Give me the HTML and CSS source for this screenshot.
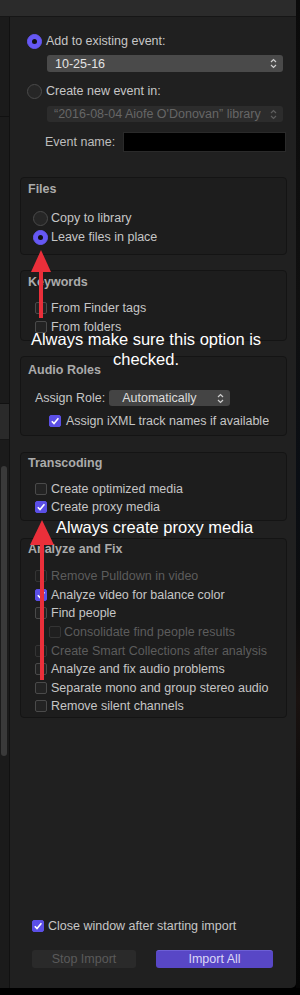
FILE: index.html
```html
<!DOCTYPE html>
<html>
<head>
<meta charset="utf-8">
<link rel="stylesheet" href="styles.css">
</head>
<body>
<div class="screen">
  <div class="window">
    <div class="titlebar"></div>
    <div class="body">
      <div class="sidebar">
        <div class="sb-top"></div>
        <div class="sb-mid"></div>
        <div class="sb-band"></div>
        <div class="sb-scroll"><div class="thumb"></div></div>
        <div class="sb-rest"></div>
      </div>
      <div class="main">
        <div class="event">
          <div class="row top-radio">
            <span class="radio on"></span><span class="lbl">Add to existing event:</span>
          </div>
          <div class="popup wide">
            <span>10-25-16</span>
            <svg class="chev" width="7" height="11" viewBox="0 0 7 11"><path d="M1 4 L3.5 1.5 L6 4 M1 7 L3.5 9.5 L6 7" fill="none" stroke="#cfcfcf" stroke-width="1.2"/></svg>
          </div>
          <div class="row top-radio second">
            <span class="radio"></span><span class="lbl">Create new event in:</span>
          </div>
          <div class="popup wide disabled">
            <span>“2016-08-04 Aiofe O'Donovan” library</span>
            <svg class="chev" width="7" height="11" viewBox="0 0 7 11"><path d="M1 4 L3.5 1.5 L6 4 M1 7 L3.5 9.5 L6 7" fill="none" stroke="#5e5e5e" stroke-width="1.2"/></svg>
          </div>
          <div class="name-row">
            <span class="lbl">Event name:</span>
            <span class="field"></span>
          </div>
        </div>

        <div class="group g-files">
          <div class="title">Files</div>
          <div class="opts">
            <div class="row"><span class="slot"><span class="radio"></span></span><span class="lbl">Copy to library</span></div>
            <div class="row"><span class="slot"><span class="radio on"></span></span><span class="lbl">Leave files in place</span></div>
          </div>
        </div>

        <div class="group g-keys">
          <div class="title">Keywords</div>
          <div class="opts">
            <div class="row"><span class="slot"><span class="box"></span></span><span class="lbl">From Finder tags</span></div>
            <div class="row"><span class="slot"><span class="box"></span></span><span class="lbl">From folders</span></div>
          </div>
        </div>

        <div class="group g-audio">
          <div class="title">Audio Roles</div>
          <div class="role-row">
            <span class="lbl">Assign Role:</span>
            <div class="popup role">
              <span>Automatically</span>
              <svg class="chev" width="7" height="11" viewBox="0 0 7 11"><path d="M1 4 L3.5 1.5 L6 4 M1 7 L3.5 9.5 L6 7" fill="none" stroke="#cfcfcf" stroke-width="1.2"/></svg>
            </div>
          </div>
          <div class="row ixml"><span class="box on"><svg width="12" height="12" viewBox="0 0 12 12"><path d="M2.8 6.2 L5 8.6 L9.4 3.2" fill="none" stroke="#fff" stroke-width="1.6"/></svg></span><span class="lbl">Assign iXML track names if available</span></div>
        </div>

        <div class="group g-trans">
          <div class="title">Transcoding</div>
          <div class="opts">
            <div class="row"><span class="slot"><span class="box"></span></span><span class="lbl">Create optimized media</span></div>
            <div class="row"><span class="slot"><span class="box on"><svg width="12" height="12" viewBox="0 0 12 12"><path d="M2.8 6.2 L5 8.6 L9.4 3.2" fill="none" stroke="#fff" stroke-width="1.6"/></svg></span></span><span class="lbl">Create proxy media</span></div>
          </div>
        </div>

        <div class="group g-analyze">
          <div class="title">Analyze and Fix</div>
          <div class="opts tight">
            <div class="row dis"><span class="slot"><span class="box"></span></span><span class="lbl">Remove Pulldown in video</span></div>
            <div class="row"><span class="slot"><span class="box on"><svg width="12" height="12" viewBox="0 0 12 12"><path d="M2.8 6.2 L5 8.6 L9.4 3.2" fill="none" stroke="#fff" stroke-width="1.6"/></svg></span></span><span class="lbl">Analyze video for balance color</span></div>
            <div class="row"><span class="slot"><span class="box"></span></span><span class="lbl">Find people</span></div>
            <div class="row dis indent"><span class="slot"><span class="box"></span></span><span class="lbl">Consolidate find people results</span></div>
            <div class="row dis"><span class="slot"><span class="box"></span></span><span class="lbl">Create Smart Collections after analysis</span></div>
            <div class="row"><span class="slot"><span class="box"></span></span><span class="lbl">Analyze and fix audio problems</span></div>
            <div class="row"><span class="slot"><span class="box"></span></span><span class="lbl">Separate mono and group stereo audio</span></div>
            <div class="row"><span class="slot"><span class="box"></span></span><span class="lbl">Remove silent channels</span></div>
          </div>
        </div>

        <div class="footer">
          <div class="row close-row"><span class="box on"><svg width="12" height="12" viewBox="0 0 12 12"><path d="M2.8 6.2 L5 8.6 L9.4 3.2" fill="none" stroke="#fff" stroke-width="1.6"/></svg></span><span class="lbl">Close window after starting import</span></div>
          <div class="buttons">
            <div class="btn stop">Stop Import</div>
            <div class="btn primary">Import All</div>
          </div>
        </div>
      </div>
    </div>
  </div>
  <div class="edge"></div>
</div>

<div class="note note1">Always make sure this option is<br>checked.</div>
<div class="note note2">Always create proxy media</div>
<svg class="arrow arrow1" width="22" height="70" viewBox="0 0 22 70"><polygon points="11,0 1,22 21,22" fill="#ea2f3a"/><rect x="9" y="20" width="4" height="48" fill="#ea2f3a"/></svg>
<svg class="arrow arrow2" width="24" height="162" viewBox="0 0 24 162"><polygon points="12,0 0,25 24,25" fill="#ea2f3a"/><rect x="10" y="23" width="4" height="137" fill="#ea2f3a"/></svg>
</body>
</html>
```

FILE: styles.css
```css
* { box-sizing: border-box; }
html, body { margin: 0; padding: 0; }
body {
  background: #000;
  width: 300px;
  height: 995px;
  overflow: hidden;
  font-family: "Liberation Sans", Arial, sans-serif;
  font-size: 12.5px;
  color: #c6c6c6;
  position: relative;
}
.screen { display: flex; height: 988px; }
.window {
  width: 296px;
  height: 988px;
  background: #202020;
  display: flex;
  flex-direction: column;
  border-bottom-right-radius: 5px;
  overflow: hidden;
}
.edge {
  width: 4px;
  background: linear-gradient(#0b0b0b 0, #101010 300px, #0a0e14 480px, #0d0d0d 620px, #1a1210 700px, #0b0b0b 800px, #050505 988px);
}
.titlebar {
  height: 17px;
  background: #2b2b2b;
  border-bottom: 1px solid #161616;
  flex: none;
}
.body { flex: 1; display: flex; }
.sidebar {
  width: 10px;
  background: #1b1b1b;
  border-right: 1px solid #111;
  display: flex;
  flex-direction: column;
}
.sb-top { height: 100px; border-bottom: 1px solid #111; }
.sb-mid { height: 287px; border-bottom: 1px solid #111; }
.sb-band { height: 36px; background: #2a2a2a; border-bottom: 1px solid #161616; }
.sb-scroll { height: 330px; padding: 26px 2px 0 1px; }
.thumb { height: 290px; width: 6px; background: #3a3a3a; border-radius: 3px; }
.sb-rest { flex: 1; }

.main {
  flex: 1;
  display: flex;
  flex-direction: column;
}
.row { display: flex; align-items: center; height: 16px; line-height: 16px; white-space: nowrap; }
.lbl { display: block; }

.radio {
  width: 15px; height: 15px;
  border-radius: 50%;
  background: #262626;
  border: 1px solid #4a4a4a;
  display: block;
  position: relative;
}
.radio.on {
  background: #6658f4;
  border-color: #6658f4;
}
.radio.on::after {
  content: "";
  position: absolute;
  left: 4px; top: 4px;
  width: 5px; height: 5px;
  border-radius: 50%;
  background: #111;
}
.box {
  width: 12px; height: 12px;
  border-radius: 2px;
  border: 1px solid #4a4a4a;
  background: #232323;
  display: block;
}
.box.on {
  background: #5b4fe6;
  border-color: #5b4fe6;
}
.box svg { display: block; margin: -1px; }

.event { padding: 16px 0 0 17px; display: flex; flex-direction: column; }
.top-radio .lbl { margin-left: 4px; }
.top-radio.second { margin-top: 11px; }
.popup {
  display: flex;
  align-items: center;
  justify-content: space-between;
  border-radius: 3px;
  white-space: nowrap;
  overflow: hidden;
}
.popup.wide {
  margin-left: 20px;
  margin-top: 6px;
  width: 236px;
  height: 17px;
  background: #4a4a4a;
  color: #e4e4e4;
  padding: 0 6px 0 8px;
}
.popup.disabled {
  margin-top: 7px;
  height: 16px;
  background: #2c2c2c;
  color: #666;
  padding-left: 7px;
}
.popup.disabled span { overflow: hidden; }
.chev { flex: none; display: block; }
.name-row { display: flex; align-items: center; margin-top: 10px; margin-left: 18px; }
.name-row .lbl { width: 78px; color: #bdbdbd; }
.field { width: 163px; height: 20px; background: #000; border: 1px solid #2a2a2a; display: block; }

.group {
  margin-left: 10px;
  width: 267px;
  border: 1px solid #141414;
  border-radius: 4px;
  background: #1d1d1d;
  padding-left: 7px;
  display: flex;
  flex-direction: column;
}
.title { height: 16px; line-height: 16px; font-weight: bold; color: #ababab; font-size: 12.5px; }
.opts { display: flex; flex-direction: column; gap: 3px; }
.slot { width: 15px; margin-left: 5px; display: flex; justify-content: center; flex: none; }
.opts .lbl { margin-left: 3px; }
.dis .lbl { color: #5c5c5c; }
.dis .box { border-color: #343434; background: #1f1f1f; }

.g-files { margin-top: 25px; height: 78px; padding-top: 3px; }
.g-files .opts { margin-top: 13px; }
.g-keys { margin-top: 15px; height: 71px; padding-top: 3px; }
.g-keys .opts { margin-top: 10px; }
.g-audio { margin-top: 15px; height: 80px; padding-top: 5px; }
.role-row { display: flex; align-items: center; margin-top: 12px; padding-left: 7px; white-space: nowrap; }
.popup.role {
  margin-left: 4px;
  width: 121px;
  height: 16px;
  background: #444;
  color: #dcdcdc;
  padding: 0 6px 0 13px;
}
.ixml { margin-top: 7px; padding-left: 21px; }
.ixml .lbl { margin-left: 5px; }
.g-trans { margin-top: 16px; height: 69px; padding-top: 2px; }
.g-trans .opts { margin-top: 10px; gap: 2px; }
.g-analyze { margin-top: 17px; height: 180px; padding-top: 2px; }
.g-analyze .opts { margin-top: 10px; gap: 0; }
.g-analyze .row { height: 18.57px; }
.indent .slot { margin-left: 19px; }
.indent .lbl { margin-left: 2px; }

.footer { margin-top: auto; padding: 0 0 20px 22px; display: flex; flex-direction: column; }
.close-row .lbl { margin-left: 4px; }
.buttons { display: flex; gap: 20px; margin-top: 16px; }
.btn {
  height: 18px;
  line-height: 18px;
  text-align: center;
  border-radius: 3px;
  font-size: 12.5px;
}
.btn.stop { width: 104px; background: #2a2a2a; color: #5a5a5a; }
.btn.primary { width: 117px; background: #5847c6; color: #dcd8f6; border-top: 1px solid #6d5fd6; line-height: 17px; }

.note {
  position: absolute;
  color: #fff;
  font-family: "Liberation Sans", Arial, sans-serif;
  font-size: 16.5px;
  line-height: 20px;
  text-align: center;
  white-space: nowrap;
}
.note1 { left: 21px; top: 329px; width: 250px; }
.note2 { left: 56px; top: 517px; }
.arrow { position: absolute; display: block; }
.arrow1 { left: 30px; top: 250px; }
.arrow2 { left: 30px; top: 520px; }
```
